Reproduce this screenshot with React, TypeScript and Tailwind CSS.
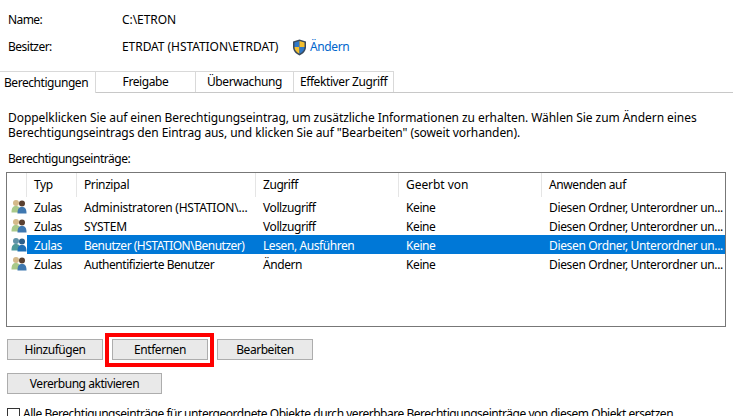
const Shield = () => (
  <svg width="15" height="17" viewBox="0 0 15 17" className="mr-[3px]">
    <path d="M7.5 0.5 L14 2.5 V8 C14 12 11 15 7.5 16.5 C4 15 1 12 1 8 V2.5 Z" fill="#3a4a5c" />
    <path d="M7.5 2 L2.5 3.5 V8 H7.5 Z" fill="#2f78c8" />
    <path d="M7.5 2 L12.5 3.5 V8 H7.5 Z" fill="#f5c02e" />
    <path d="M2.5 8 H7.5 V14.8 C4.5 13.4 2.5 11 2.5 8 Z" fill="#f5c02e" />
    <path d="M12.5 8 H7.5 V14.8 C10.5 13.4 12.5 11 12.5 8 Z" fill="#2f78c8" />
  </svg>
);

const Users = ({ selected }: { selected?: boolean }) => (
  <svg width="16" height="15" viewBox="0 0 16 15">
    <circle cx="5" cy="4" r="3" fill={selected ? "#5f93a8" : "#d4b98a"} />
    <path d="M0.5 13.5 C0.5 8.5 2 7 5 7 C8 7 9.5 9 9.5 13.5 Z" fill={selected ? "#4f9a9a" : "#a9c98a"} />
    <circle cx="11" cy="4.5" r="3" fill={selected ? "#2c5f8a" : "#5a4030"} />
    <path d="M6.5 14.5 C6.5 9.5 8 8 11 8 C14 8 15.5 9.5 15.5 14.5 Z" fill={selected ? "#1f6fb5" : "#3f78b0"} />
  </svg>
);

const rows = [
  { p: "Administratoren (HSTATION\\...", z: "Vollzugriff", t: "tracking-[-0.23px]" },
  { p: "SYSTEM", z: "Vollzugriff", t: "tracking-[-0.2px]" },
  { p: "Benutzer (HSTATION\\Benutzer)", z: "Lesen, Ausführen", t: "tracking-[-0.5px]", selected: true },
  { p: "Authentifizierte Benutzer", z: "Ändern", t: "tracking-[-0.45px]" },
];

const tabs = [
  { label: "Freigabe", w: "w-[100px]" },
  { label: "Überwachung", w: "w-[98px]" },
  { label: "Effektiver Zugriff", w: "w-[100px]" },
];

const headers = [
  { label: "", w: "w-[20px]", t: "" },
  { label: "Typ", w: "w-[50px] pl-[7px]", t: "tracking-[-0.4px]" },
  { label: "Prinzipal", w: "w-[179px] pl-[7px]", t: "tracking-[-0.4px]" },
  { label: "Zugriff", w: "w-[143px] pl-[7px]", t: "tracking-[-0.45px]" },
  { label: "Geerbt von", w: "w-[143px] pl-[7px]", t: "tracking-[-0.06px]" },
  { label: "Anwenden auf", w: "flex-1 pl-[7px]", t: "tracking-[-0.4px]" },
];

const Btn = ({ label, w }: { label: string; w: string }) => (
  <button className={`${w} h-[21px] bg-[#e9e9e9] border border-[#adadad] text-[#000] leading-[19px] tracking-[-0.45px]`}>{label}</button>
);

export default function App() {
  return (
    <div className="w-[733px] h-[416px] overflow-hidden bg-white text-[12px] leading-[16px] tracking-[-0.06px] text-[#000]" style={{ fontFamily: '"Noto Sans", "Open Sans", sans-serif' }}>
      <div className="pl-[8px] pt-[12px]">
        <div className="flex h-[16px]">
          <div className="w-[114px] tracking-[-0.6px]">Name:</div>
          <div>C:\ETRON</div>
        </div>
        <div className="flex h-[16px] mt-[11px] items-center">
          <div className="w-[114px] tracking-[-0.5px]">Besitzer:</div>
          <div className="w-[170px]">ETRDAT (HSTATION\ETRDAT)</div>
          <Shield />
          <div className="text-[#0066cc] tracking-[-0.4px]">Ändern</div>
        </div>
      </div>
      <div className="flex h-[22px] mt-[16px] border-b border-[#c8c8c8] relative">
        <div className="w-[96px] h-[22px] bg-white border-r border-t border-[#d9d9d9] flex items-center pl-[4px] tracking-[-0.45px] relative z-10">Berechtigungen</div>
        {tabs.map((t) => (
          <div key={t.label} className={`${t.w} h-[21px] bg-white border-r border-t border-[#d9d9d9] flex items-center justify-center tracking-[-0.4px]`}>{t.label}</div>
        ))}
      </div>
      <div className="pl-[8px] pt-[17px] leading-[15px]">
        <p>Doppelklicken Sie auf einen Berechtigungseintrag, um zusätzliche Informationen zu erhalten. Wählen Sie zum Ändern eines</p>
        <p className="tracking-[-0.09px]">Berechtigungseintrags den Eintrag aus, und klicken Sie auf "Bearbeiten" (soweit vorhanden).</p>
        <p className="mt-[11px] tracking-[-0.46px]">Berechtigungseinträge:</p>
      </div>
      <div className="ml-[6px] mt-[6px] w-[720px] h-[155px] border border-[#777777] bg-white">
        <div className="flex h-[24px] items-center">
          {headers.map((h, i) => (
            <div key={i} className={`${h.w} ${h.t} shrink-0 h-[24px] flex items-center ${i < 5 ? "border-r border-[#e5e5e5]" : ""}`}>{h.label}</div>
          ))}
        </div>
        <div>
          {rows.map((r) => (
            <div key={r.p} className="flex h-[19px] items-center">
              <div className="w-[20px] shrink-0 pl-[4px] flex items-center"><Users selected={r.selected} /></div>
              <div className={`flex flex-1 min-w-0 h-[19px] pt-[2px] items-center ${r.selected ? "bg-[#0078d7] text-white" : ""}`}>
                <div className="w-[50px] shrink-0 pl-[7px] tracking-[-0.4px]">Zulas</div>
                <div className={`w-[179px] shrink-0 pl-[7px] whitespace-nowrap overflow-hidden ${r.t}`}>{r.p}</div>
                <div className="w-[143px] shrink-0 pl-[7px] tracking-[-0.42px]">{r.z}</div>
                <div className="w-[143px] shrink-0 pl-[7px] tracking-[-0.4px]">Keine</div>
                <div className="flex-1 min-w-0 pl-[7px] whitespace-nowrap overflow-hidden tracking-[-0.34px]">Diesen Ordner, Unterordner un...</div>
              </div>
            </div>
          ))}
        </div>
      </div>
      <div className="flex pl-[7px] mt-[12px] gap-[9px]">
        <Btn label="Hinzufügen" w="w-[96px]" />
        <div className="relative">
          <Btn label="Entfernen" w="w-[96px]" />
          <div className="absolute -left-[7px] -top-[6px] w-[109px] h-[34px] border-[4px] border-[#ff0000]" />
        </div>
        <Btn label="Bearbeiten" w="w-[96px]" />
      </div>
      <div className="pl-[7px] mt-[13px]">
        <Btn label="Vererbung aktivieren" w="w-[155px]" />
      </div>
      <div className="flex pl-[7px] mt-[14px] items-start">
        <div className="w-[13px] h-[13px] border border-[#333333] mr-[3px] shrink-0" />
        <div className="whitespace-nowrap -mt-[2px] tracking-[-0.47px]">Alle Berechtigungseinträge für untergeordnete Objekte durch vererbbare Berechtigungseinträge von diesem Objekt ersetzen</div>
      </div>
    </div>
  );
}
